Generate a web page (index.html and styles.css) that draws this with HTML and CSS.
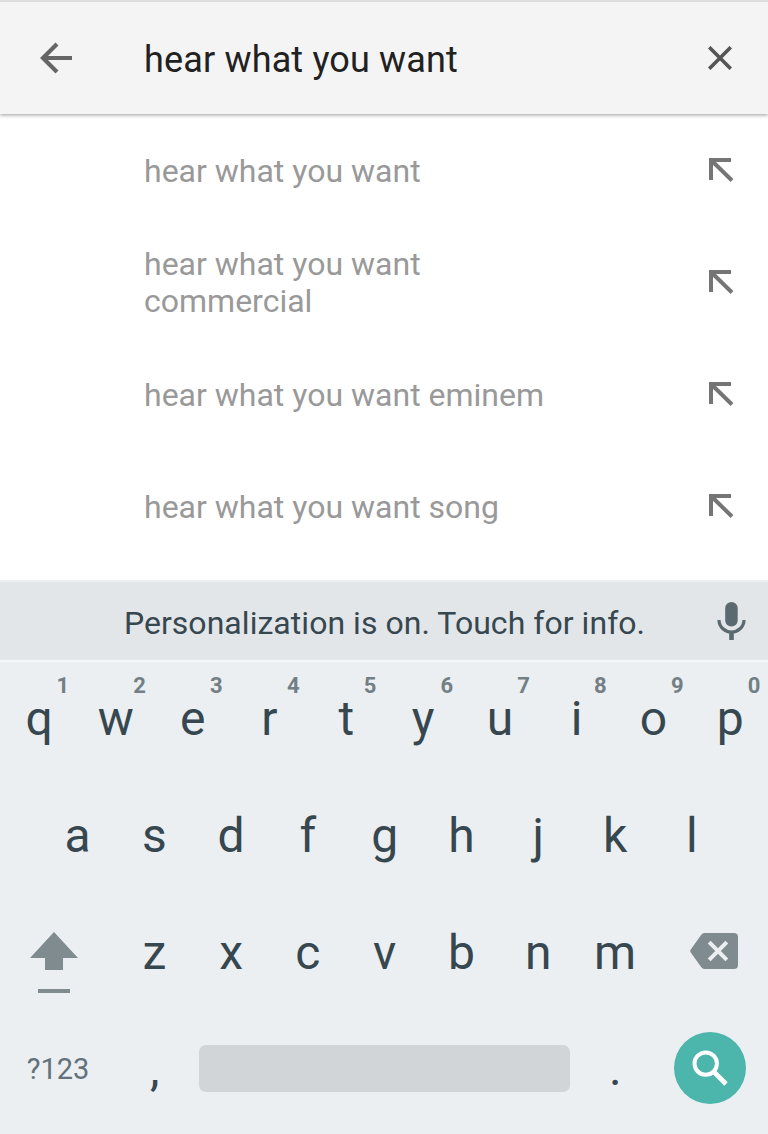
FILE: index.html
```html
<!DOCTYPE html>
<html lang="en">
<head>
<meta charset="utf-8">
<title>Search</title>
<link rel="stylesheet" href="styles.css">
</head>
<body>
<header class="search-bar">
  <svg class="back" width="34" height="34" viewBox="0 0 34 34"><path d="M33 17H4M18 3L4 17l14 14" fill="none" stroke="#666" stroke-width="4.200"/></svg>
  <div class="query">hear what you want</div>
  <svg class="clear" width="24" height="24" viewBox="0 0 24 24"><path d="M1.200 1.200l21.600 21.600M22.800 1.200L1.200 22.800" stroke="#555" stroke-width="3.600"/></svg>
</header>
<main class="suggestions">
  <div class="suggestion"><span>hear what you want</span><svg width="26" height="26" viewBox="0 0 26 26"><path d="M23 3H3v20" /><path d="M3.500 3.500L24 23.500"/></svg></div>
  <div class="suggestion"><span>hear what you want<br>commercial</span><svg width="26" height="26" viewBox="0 0 26 26"><path d="M23 3H3v20" /><path d="M3.500 3.500L24 23.500"/></svg></div>
  <div class="suggestion"><span>hear what you want eminem</span><svg width="26" height="26" viewBox="0 0 26 26"><path d="M23 3H3v20" /><path d="M3.500 3.500L24 23.500"/></svg></div>
  <div class="suggestion"><span>hear what you want song</span><svg width="26" height="26" viewBox="0 0 26 26"><path d="M23 3H3v20" /><path d="M3.500 3.500L24 23.500"/></svg></div>
</main>
<section class="keyboard">
  <div class="strip">
    <span class="notice">Personalization is on. Touch for info.</span>
    <svg class="mic" width="30" height="40" viewBox="0 0 30 40"><rect x="9.200" y="1" width="12.500" height="24.500" rx="6.250" fill="#5b6970"/><path d="M3 19a12.500 12 0 0 0 25 0" fill="none" stroke="#5b6970" stroke-width="3.200"/><path d="M15.500 30v9" stroke="#5b6970" stroke-width="4.600"/></svg>
  </div>
  <div class="row">
    <div class="key">q<sup>1</sup></div><div class="key">w<sup>2</sup></div><div class="key">e<sup>3</sup></div><div class="key">r<sup>4</sup></div><div class="key">t<sup>5</sup></div><div class="key">y<sup>6</sup></div><div class="key">u<sup>7</sup></div><div class="key">i<sup>8</sup></div><div class="key">o<sup>9</sup></div><div class="key">p<sup>0</sup></div>
  </div>
  <div class="row">
    <div class="key">a</div><div class="key">s</div><div class="key">d</div><div class="key">f</div><div class="key">g</div><div class="key">h</div><div class="key">j</div><div class="key">k</div><div class="key">l</div>
  </div>
  <div class="row">
    <div class="wide shift"><svg width="48" height="62" viewBox="0 0 48 62"><path d="M24 0L48 26H33v12H15V26H0zM8 57h32v4H8z" fill="#808b8f"/></svg></div>
    <div class="key">z</div><div class="key">x</div><div class="key">c</div><div class="key">v</div><div class="key">b</div><div class="key">n</div><div class="key">m</div>
    <div class="wide delete"><svg width="48" height="36" viewBox="0 0 48 36"><path d="M14.500 0H44q4 0 4 4v28q0 4-4 4H14.500q-2 0-3.400-2L.6 19.200q-.8-1.200 0-2.400L11.100 2q1.400-2 3.400-2z" fill="#808b8f"/><path d="M19.200 9.200l17.600 17.600M36.800 9.200L19.200 26.800" stroke="#ebeff2" stroke-width="4"/></svg></div>
  </div>
  <div class="row bottom">
    <div class="wide symbols">?123</div>
    <div class="key">,</div>
    <div class="space-area"><div class="space"></div></div>
    <div class="key">.</div>
    <div class="wide action"><div class="enter"><svg width="36" height="36" viewBox="0 0 36 36" fill="none" stroke="#fff"><circle cx="13.700" cy="13.600" r="11.200" stroke-width="4"/><path d="M22.500 22.500L34 34" stroke-width="4.600"/></svg></div></div>
  </div>
</section>
</body>
</html>
```
FILE: styles.css
```css
* { box-sizing: border-box; }
body {
  margin: 0;
  width: 768px;
  height: 1134px;
  display: flex;
  flex-direction: column;
  overflow: hidden;
  background: #fff;
  font-family: Roboto, sans-serif;
}
svg { display: block; flex: none; }
.search-bar {
  height: 114px;
  flex: none;
  display: flex;
  align-items: center;
  padding: 0 36px 0 39px;
  border-top: 2px solid #dcdcdc;
  background: #f4f4f4;
  box-shadow: 0 1px 4px rgba(0, 0, 0, .4);
}
.query {
  flex: 1;
  margin-left: 71px;
  padding-top: 4px;
  font-size: 36px;
  line-height: 42px;
  letter-spacing: .16px;
  color: #212121;
}
.suggestions { flex: none; height: 466px; }
.suggestion {
  height: 112px;
  display: flex;
  align-items: center;
  justify-content: space-between;
  padding: 2px 34px 0 144px;
  font-size: 32px;
  line-height: 37px;
  color: #999;
}
.suggestion svg { margin-bottom: 2px; }
.suggestion path { fill: none; stroke: #757575; stroke-width: 4; }
.keyboard {
  height: 554px;
  border-top: 2px solid #eceff1;
  background: #ebeff2;
  color: #37474f;
}
.strip {
  position: relative;
  height: 80px;
  display: flex;
  align-items: center;
  justify-content: center;
  border-bottom: 2px solid #f4f7f9;
  background: #e2e6e9;
  font-size: 32px;
  line-height: 38px;
  letter-spacing: .04px;
}
.notice { padding: 4px 0 0 1px; }
.mic { position: absolute; right: 22px; top: 19px; }
.row { display: flex; justify-content: center; height: 117px; }
.strip + .row { height: 115px; }
.strip + .row .key { padding-bottom: 2px; }
.key {
  position: relative;
  width: 76.8px;
  display: flex;
  align-items: center;
  justify-content: center;
  padding-left: 1.4px;
  font-size: 48px;
  line-height: 56px;
}
.key sup {
  position: absolute;
  top: 11px;
  right: 0;
  width: 28px;
  text-align: center;
  font-size: 22px;
  line-height: 26px;
  font-weight: 700;
  color: #737f84;
}
.wide { width: 115.2px; display: flex; align-items: center; justify-content: center; }
.shift { padding: 20px 7px 0 0; }
.delete { padding: 0 0 3px 8px; }
.bottom { height: 115px; }
.bottom .key { padding-left: 2px; }
.symbols { padding-left: 1px; font-size: 29px; color: #63727a; }
.space-area { width: 384px; padding: 0 6px 0 7px; display: flex; align-items: center; }
.space { width: 100%; height: 47px; border-radius: 7px; background: #d1d5d8; }
.action { padding-bottom: 1px; }
.enter {
  width: 72px;
  height: 72px;
  border-radius: 50%;
  display: flex;
  align-items: center;
  justify-content: center;
  background: #4db6ac;
}
```
